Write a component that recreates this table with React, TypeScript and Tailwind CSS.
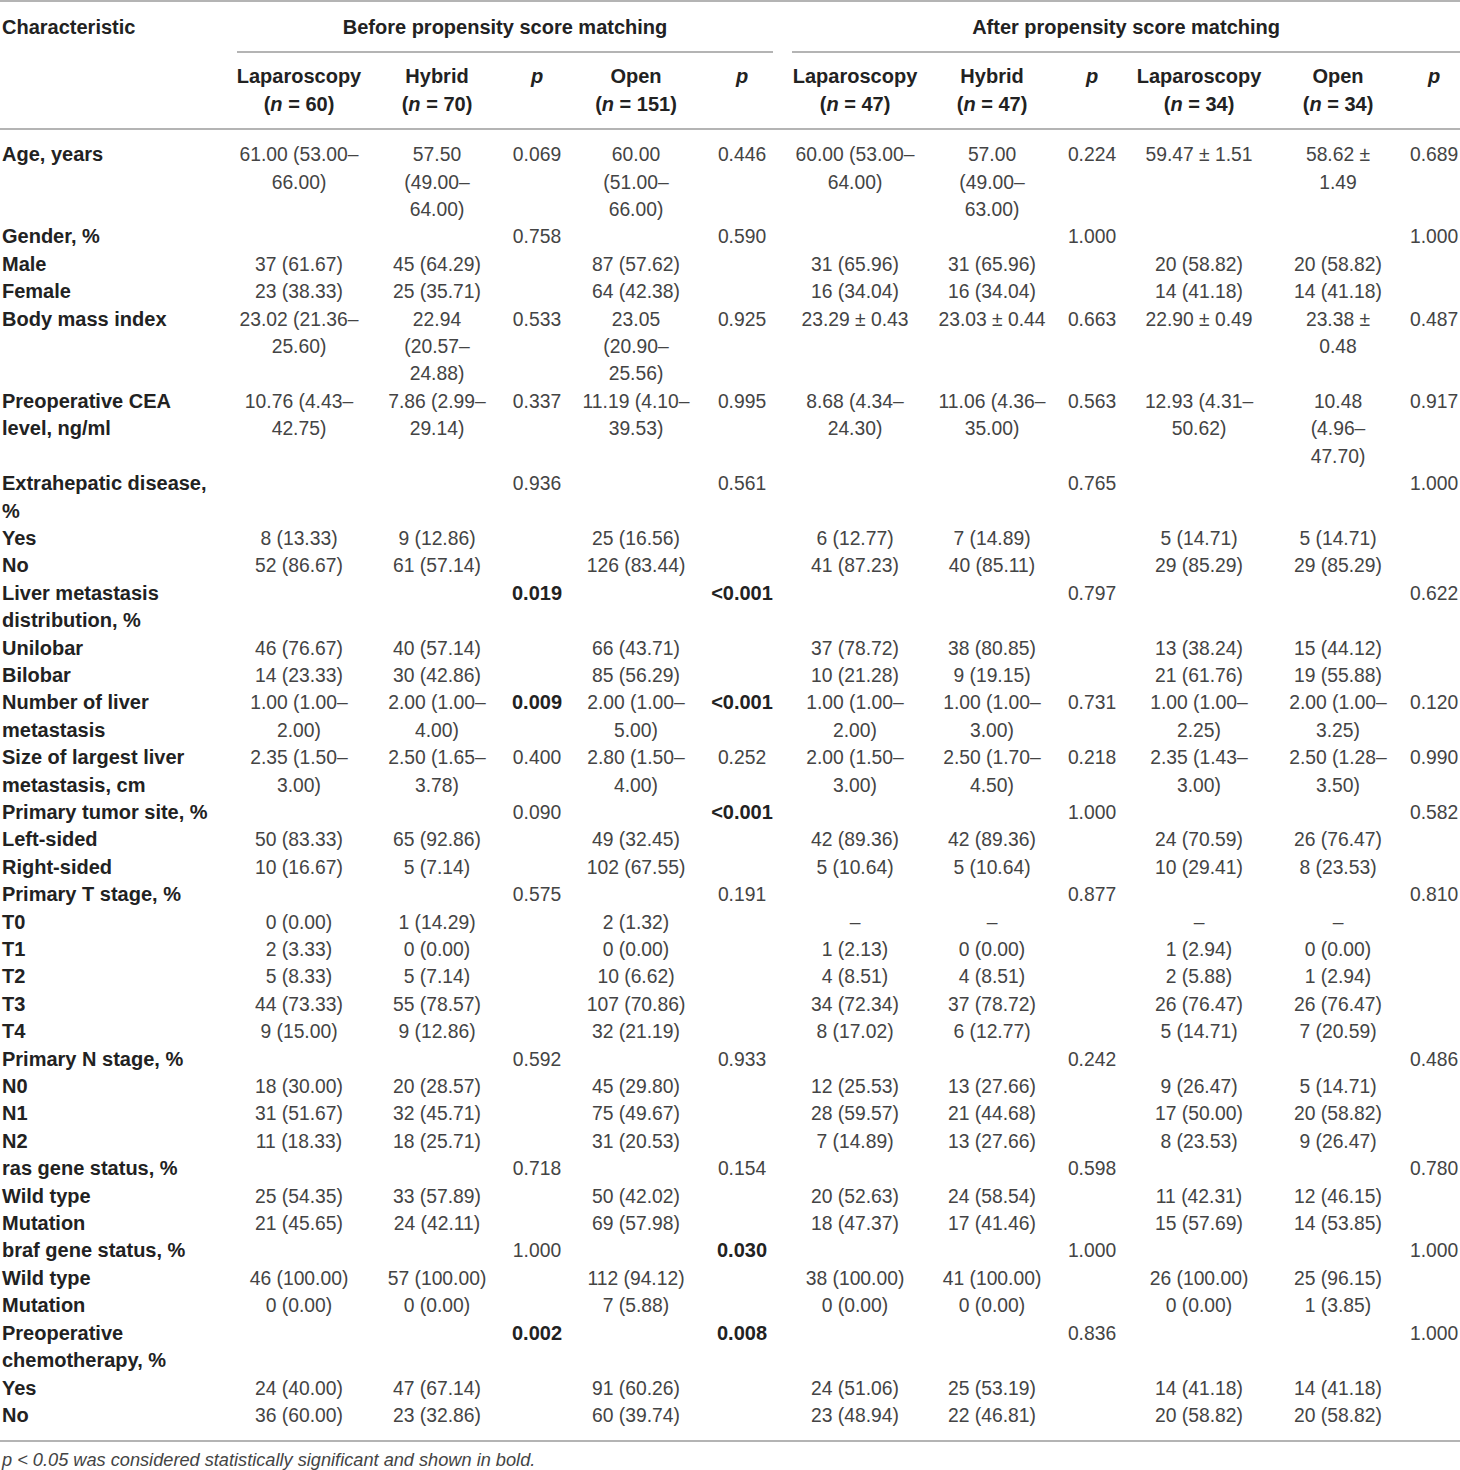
import React from "react";

const COLS = [230, 138, 138, 62, 136, 76, 150, 124, 76, 138, 140, 52];

type Row = { label: string; cells: string[] };

const E = "";
const ROWS: Row[] = [
  { label: "Age, years", cells: ["61.00 (53.00–|66.00)", "57.50|(49.00–|64.00)", "0.069", "60.00|(51.00–|66.00)", "0.446", "60.00 (53.00–|64.00)", "57.00|(49.00–|63.00)", "0.224", "59.47 ± 1.51", "58.62 ±|1.49", "0.689"] },
  { label: "Gender, %", cells: [E, E, "0.758", E, "0.590", E, E, "1.000", E, E, "1.000"] },
  { label: "Male", cells: ["37 (61.67)", "45 (64.29)", E, "87 (57.62)", E, "31 (65.96)", "31 (65.96)", E, "20 (58.82)", "20 (58.82)", E] },
  { label: "Female", cells: ["23 (38.33)", "25 (35.71)", E, "64 (42.38)", E, "16 (34.04)", "16 (34.04)", E, "14 (41.18)", "14 (41.18)", E] },
  { label: "Body mass index", cells: ["23.02 (21.36–|25.60)", "22.94|(20.57–|24.88)", "0.533", "23.05|(20.90–|25.56)", "0.925", "23.29 ± 0.43", "23.03 ± 0.44", "0.663", "22.90 ± 0.49", "23.38 ±|0.48", "0.487"] },
  { label: "Preoperative CEA|level, ng/ml", cells: ["10.76 (4.43–|42.75)", "7.86 (2.99–|29.14)", "0.337", "11.19 (4.10–|39.53)", "0.995", "8.68 (4.34–|24.30)", "11.06 (4.36–|35.00)", "0.563", "12.93 (4.31–|50.62)", "10.48|(4.96–|47.70)", "0.917"] },
  { label: "Extrahepatic disease,|%", cells: [E, E, "0.936", E, "0.561", E, E, "0.765", E, E, "1.000"] },
  { label: "Yes", cells: ["8 (13.33)", "9 (12.86)", E, "25 (16.56)", E, "6 (12.77)", "7 (14.89)", E, "5 (14.71)", "5 (14.71)", E] },
  { label: "No", cells: ["52 (86.67)", "61 (57.14)", E, "126 (83.44)", E, "41 (87.23)", "40 (85.11)", E, "29 (85.29)", "29 (85.29)", E] },
  { label: "Liver metastasis|distribution, %", cells: [E, E, "*0.019", E, "*<0.001", E, E, "0.797", E, E, "0.622"] },
  { label: "Unilobar", cells: ["46 (76.67)", "40 (57.14)", E, "66 (43.71)", E, "37 (78.72)", "38 (80.85)", E, "13 (38.24)", "15 (44.12)", E] },
  { label: "Bilobar", cells: ["14 (23.33)", "30 (42.86)", E, "85 (56.29)", E, "10 (21.28)", "9 (19.15)", E, "21 (61.76)", "19 (55.88)", E] },
  { label: "Number of liver|metastasis", cells: ["1.00 (1.00–|2.00)", "2.00 (1.00–|4.00)", "*0.009", "2.00 (1.00–|5.00)", "*<0.001", "1.00 (1.00–|2.00)", "1.00 (1.00–|3.00)", "0.731", "1.00 (1.00–|2.25)", "2.00 (1.00–|3.25)", "0.120"] },
  { label: "Size of largest liver|metastasis, cm", cells: ["2.35 (1.50–|3.00)", "2.50 (1.65–|3.78)", "0.400", "2.80 (1.50–|4.00)", "0.252", "2.00 (1.50–|3.00)", "2.50 (1.70–|4.50)", "0.218", "2.35 (1.43–|3.00)", "2.50 (1.28–|3.50)", "0.990"] },
  { label: "Primary tumor site, %", cells: [E, E, "0.090", E, "*<0.001", E, E, "1.000", E, E, "0.582"] },
  { label: "Left-sided", cells: ["50 (83.33)", "65 (92.86)", E, "49 (32.45)", E, "42 (89.36)", "42 (89.36)", E, "24 (70.59)", "26 (76.47)", E] },
  { label: "Right-sided", cells: ["10 (16.67)", "5 (7.14)", E, "102 (67.55)", E, "5 (10.64)", "5 (10.64)", E, "10 (29.41)", "8 (23.53)", E] },
  { label: "Primary T stage, %", cells: [E, E, "0.575", E, "0.191", E, E, "0.877", E, E, "0.810"] },
  { label: "T0", cells: ["0 (0.00)", "1 (14.29)", E, "2 (1.32)", E, "–", "–", E, "–", "–", E] },
  { label: "T1", cells: ["2 (3.33)", "0 (0.00)", E, "0 (0.00)", E, "1 (2.13)", "0 (0.00)", E, "1 (2.94)", "0 (0.00)", E] },
  { label: "T2", cells: ["5 (8.33)", "5 (7.14)", E, "10 (6.62)", E, "4 (8.51)", "4 (8.51)", E, "2 (5.88)", "1 (2.94)", E] },
  { label: "T3", cells: ["44 (73.33)", "55 (78.57)", E, "107 (70.86)", E, "34 (72.34)", "37 (78.72)", E, "26 (76.47)", "26 (76.47)", E] },
  { label: "T4", cells: ["9 (15.00)", "9 (12.86)", E, "32 (21.19)", E, "8 (17.02)", "6 (12.77)", E, "5 (14.71)", "7 (20.59)", E] },
  { label: "Primary N stage, %", cells: [E, E, "0.592", E, "0.933", E, E, "0.242", E, E, "0.486"] },
  { label: "N0", cells: ["18 (30.00)", "20 (28.57)", E, "45 (29.80)", E, "12 (25.53)", "13 (27.66)", E, "9 (26.47)", "5 (14.71)", E] },
  { label: "N1", cells: ["31 (51.67)", "32 (45.71)", E, "75 (49.67)", E, "28 (59.57)", "21 (44.68)", E, "17 (50.00)", "20 (58.82)", E] },
  { label: "N2", cells: ["11 (18.33)", "18 (25.71)", E, "31 (20.53)", E, "7 (14.89)", "13 (27.66)", E, "8 (23.53)", "9 (26.47)", E] },
  { label: "ras gene status, %", cells: [E, E, "0.718", E, "0.154", E, E, "0.598", E, E, "0.780"] },
  { label: "Wild type", cells: ["25 (54.35)", "33 (57.89)", E, "50 (42.02)", E, "20 (52.63)", "24 (58.54)", E, "11 (42.31)", "12 (46.15)", E] },
  { label: "Mutation", cells: ["21 (45.65)", "24 (42.11)", E, "69 (57.98)", E, "18 (47.37)", "17 (41.46)", E, "15 (57.69)", "14 (53.85)", E] },
  { label: "braf gene status, %", cells: [E, E, "1.000", E, "*0.030", E, E, "1.000", E, E, "1.000"] },
  { label: "Wild type", cells: ["46 (100.00)", "57 (100.00)", E, "112 (94.12)", E, "38 (100.00)", "41 (100.00)", E, "26 (100.00)", "25 (96.15)", E] },
  { label: "Mutation", cells: ["0 (0.00)", "0 (0.00)", E, "7 (5.88)", E, "0 (0.00)", "0 (0.00)", E, "0 (0.00)", "1 (3.85)", E] },
  { label: "Preoperative|chemotherapy, %", cells: [E, E, "*0.002", E, "*0.008", E, E, "0.836", E, E, "1.000"] },
  { label: "Yes", cells: ["24 (40.00)", "47 (67.14)", E, "91 (60.26)", E, "24 (51.06)", "25 (53.19)", E, "14 (41.18)", "14 (41.18)", E] },
  { label: "No", cells: ["36 (60.00)", "23 (32.86)", E, "60 (39.74)", E, "23 (48.94)", "22 (46.81)", E, "20 (58.82)", "20 (58.82)", E] },
];

const HEADS: ({ t: string; n: string } | null)[] = [
  { t: "Laparoscopy", n: "60" },
  { t: "Hybrid", n: "70" },
  null,
  { t: "Open", n: "151" },
  null,
  { t: "Laparoscopy", n: "47" },
  { t: "Hybrid", n: "47" },
  null,
  { t: "Laparoscopy", n: "34" },
  { t: "Open", n: "34" },
  null,
];

function DataCell({ v }: { v: string }) {
  const bold = v.startsWith("*");
  const s = bold ? v.slice(1) : v;
  const lines = s ? s.split("|") : [];
  return (
    <td
      className={
        bold
          ? "p-0 align-top text-center whitespace-nowrap font-bold text-[20px] text-[#222222]"
          : "p-0 align-top text-center whitespace-nowrap font-normal text-[19.3px] text-[#444444]"
      }
    >
      {lines.map((l, i) => (
        <div key={i}>{l}</div>
      ))}
    </td>
  );
}

export default function App() {
  return (
    <div
      className="w-[1460px] bg-white"
      style={{ fontFamily: '"Liberation Sans", Arial, Helvetica, sans-serif' }}
    >
      <div className="border-t-2 border-[#b4b4b4]">
        <table className="table-fixed w-[1460px] border-collapse leading-[27.4px]">
          <colgroup>
            {COLS.map((w, i) => (
              <col key={i} style={{ width: w }} />
            ))}
          </colgroup>
          <thead>
            <tr>
              <th className="p-0 pt-[12px] pb-[10px] pl-[2px] text-left align-top font-bold text-[20px] text-[#222222]">
                Characteristic
              </th>
              <th colSpan={5} className="p-0 align-top">
                <div className="ml-[7px] mr-[7px] pt-[12px] pb-[10px] border-b-2 border-[#b4b4b4] text-center font-bold text-[20px] text-[#222222]">
                  Before propensity score matching
                </div>
              </th>
              <th colSpan={6} className="p-0 align-top">
                <div className="ml-[12px] pt-[12px] pb-[10px] border-b-2 border-[#b4b4b4] text-center font-bold text-[20px] text-[#222222]">
                  After propensity score matching
                </div>
              </th>
            </tr>
            <tr>
              <th className="p-0 pt-[10px] pb-[10px] border-b-2 border-[#b4b4b4]"></th>
              {HEADS.map((h, i) => (
                <th
                  key={i}
                  className="p-0 pt-[10px] pb-[10px] align-top text-center whitespace-nowrap border-b-2 border-[#b4b4b4] font-bold text-[20px] text-[#222222]"
                >
                  {h ? (
                    <>
                      <div>{h.t}</div>
                      <div>
                        (<i>n</i> = {h.n})
                      </div>
                    </>
                  ) : (
                    <div>
                      <i>p</i>
                    </div>
                  )}
                </th>
              ))}
            </tr>
          </thead>
          <tbody>
            <tr>
              <td colSpan={12} className="p-0 h-[12px]"></td>
            </tr>
            {ROWS.map((r, ri) => (
              <tr key={ri}>
                <td className="p-0 pl-[2px] align-top text-left whitespace-nowrap font-bold text-[20px] text-[#222222]">
                  {r.label.split("|").map((l, i) => (
                    <div key={i}>{l}</div>
                  ))}
                </td>
                {r.cells.map((c, ci) => (
                  <DataCell key={ci} v={c} />
                ))}
              </tr>
            ))}
            <tr>
              <td colSpan={12} className="p-0 h-[11px]"></td>
            </tr>
          </tbody>
        </table>
      </div>
      <div className="border-t-2 border-[#b4b4b4] pt-[8px] pl-[2px] leading-[20px] text-[18.2px] italic text-[#444444]">
        p &lt; 0.05 was considered statistically significant and shown in bold.
      </div>
    </div>
  );
}
